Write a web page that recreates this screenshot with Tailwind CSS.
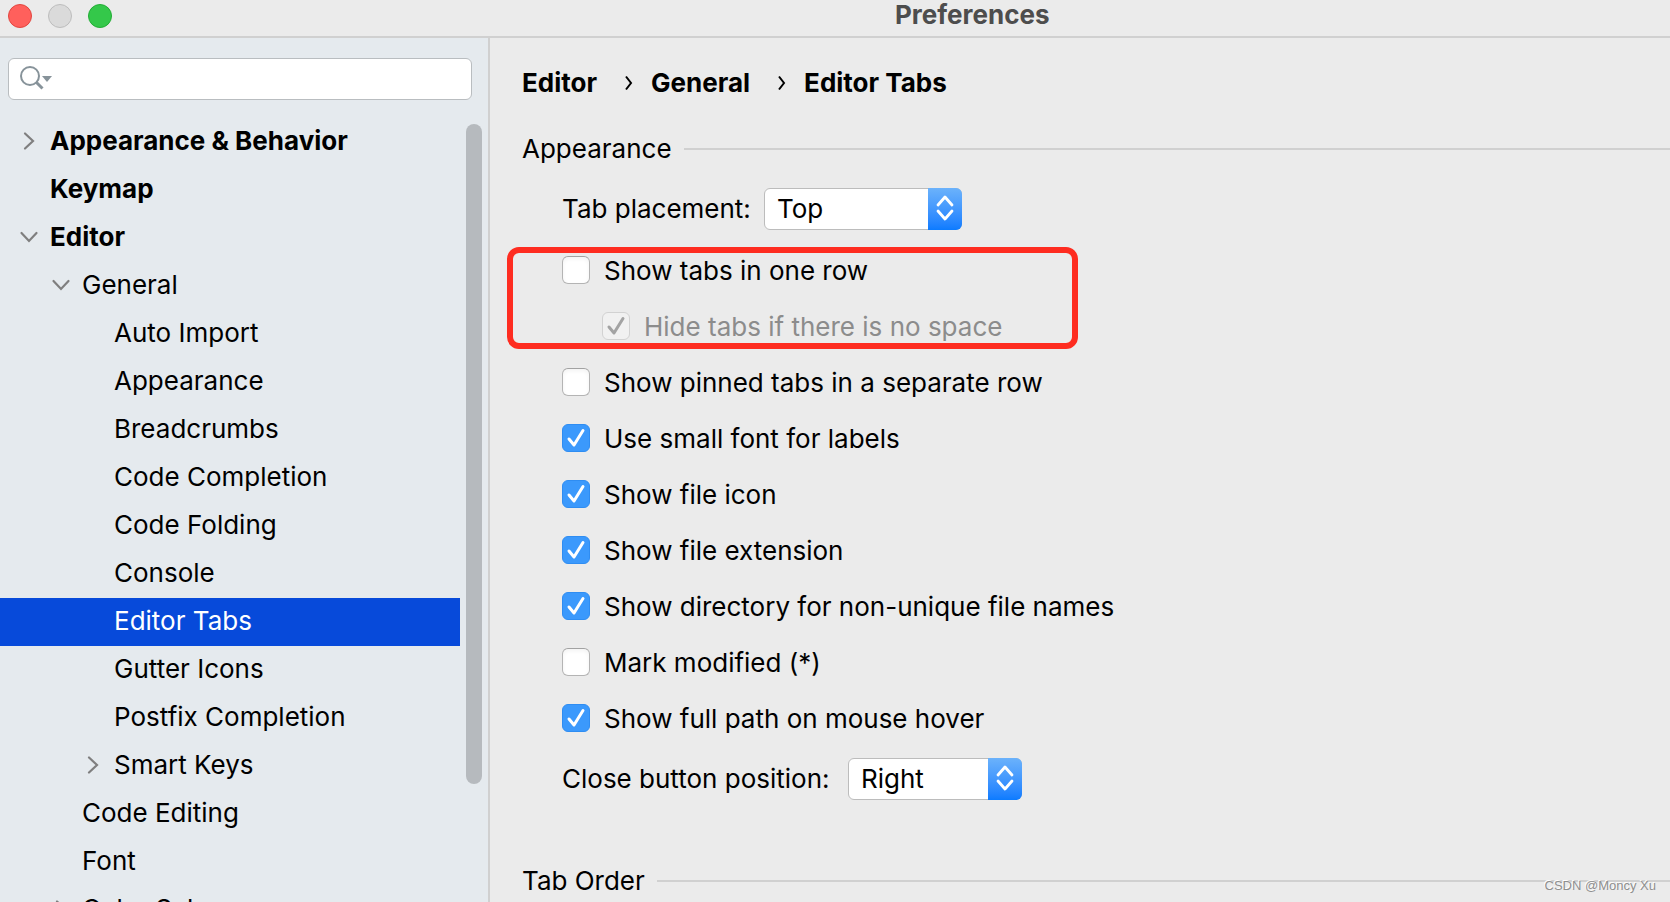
<!DOCTYPE html>
<html lang="en">
<head>
<meta charset="utf-8">
<title>Preferences</title>
<script src="https://cdn.jsdelivr.net/npm/@tailwindcss/browser@4"></script>
</head>
<body class="h-screen overflow-hidden flex flex-col bg-[#ebebeb] text-black text-[26px] leading-9 font-['Inter',sans-serif]">
<svg class="hidden">
  <symbol id="right" viewBox="0 0 20 20"><path d="M6 2.500l8 7.500-8 7.500" fill="none" stroke="#7f7f7f" stroke-width="2.200" stroke-linecap="round"/></symbol>
  <symbol id="down" viewBox="0 0 20 20"><path d="M2.500 6l7.500 8 7.500-8" fill="none" stroke="#7f7f7f" stroke-width="2.200" stroke-linecap="round"/></symbol>
  <symbol id="tick" viewBox="0 0 28 28"><path d="M7 15l5 6 9-14.500" fill="none" stroke="currentColor" stroke-width="3" stroke-linecap="round" stroke-linejoin="round"/></symbol>
  <symbol id="updown" viewBox="0 0 34 42"><path d="M10 17l7-8 7 8M10 23l7 8 7-8" fill="none" stroke="#fff" stroke-width="2.800" stroke-linecap="round" stroke-linejoin="round"/></symbol>
</svg>

<header class="h-[38px] shrink-0 flex items-start border-b-2 border-[#d0d0d0]">
  <div class="flex gap-4 pl-2 pt-1 w-[895px]">
    <button aria-label="Close" class="size-6 rounded-full bg-[#ff605c] border border-[#e2463f]"></button>
    <button aria-label="Minimize" class="size-6 rounded-full bg-[#dadada] border border-[#bdbdbd]"></button>
    <button aria-label="Zoom" class="size-6 rounded-full bg-[#34c84a] border border-[#22ad35]"></button>
  </div>
  <h1 class="font-bold text-[#4d4d4d] leading-[30px]">Preferences</h1>
</header>

<div class="flex flex-1 min-h-0">
  <aside class="w-[490px] shrink-0 bg-[#e5eaee] border-r-2 border-[#d0d0d0] pt-5 flex flex-col">
    <label class="ml-2 mr-4 h-[42px] shrink-0 flex items-center bg-white border border-[#b9bdc0] rounded-md pl-[11px] pb-0.5">
      <svg class="w-8 h-6 shrink-0" viewBox="0 0 32 24"><circle cx="10" cy="10" r="9" fill="none" stroke="#87939a" stroke-width="2"/><path d="M16.500 16.500l6 6" stroke="#87939a" stroke-width="3"/><path d="M22 10h10l-5 6z" fill="#87939a"/></svg>
      <input type="text" aria-label="Search settings" class="flex-1 min-w-0 outline-none px-2">
    </label>
    <div class="flex flex-1 min-h-0 mt-[18px]">
      <nav class="flex-1 overflow-hidden">
        <a href="#" class="flex items-center h-12 pb-0.5 pl-[19px] gap-[11px] font-bold"><svg class="size-5"><use href="#right"/></svg>Appearance &amp; Behavior</a>
        <a href="#" class="flex items-center h-12 pb-0.5 pl-[50px] font-bold">Keymap</a>
        <a href="#" class="flex items-center h-12 pb-0.5 pl-[19px] gap-[11px] font-bold"><svg class="size-5"><use href="#down"/></svg>Editor</a>
        <a href="#" class="flex items-center h-12 pb-0.5 pl-[51px] gap-[11px]"><svg class="size-5"><use href="#down"/></svg>General</a>
        <a href="#" class="flex items-center h-12 pb-0.5 pl-[114px]">Auto Import</a>
        <a href="#" class="flex items-center h-12 pb-0.5 pl-[114px]">Appearance</a>
        <a href="#" class="flex items-center h-12 pb-0.5 pl-[114px]">Breadcrumbs</a>
        <a href="#" class="flex items-center h-12 pb-0.5 pl-[114px]">Code Completion</a>
        <a href="#" class="flex items-center h-12 pb-0.5 pl-[114px]">Code Folding</a>
        <a href="#" class="flex items-center h-12 pb-0.5 pl-[114px]">Console</a>
        <a href="#" aria-current="page" class="flex items-center h-12 pb-0.5 pl-[114px] bg-[#074ada] text-white">Editor Tabs</a>
        <a href="#" class="flex items-center h-12 pb-0.5 pl-[114px]">Gutter Icons</a>
        <a href="#" class="flex items-center h-12 pb-0.5 pl-[114px]">Postfix Completion</a>
        <a href="#" class="flex items-center h-12 pb-0.5 pl-[83px] gap-[11px]"><svg class="size-5"><use href="#right"/></svg>Smart Keys</a>
        <a href="#" class="flex items-center h-12 pb-0.5 pl-[82px]">Code Editing</a>
        <a href="#" class="flex items-center h-12 pb-0.5 pl-[82px]">Font</a>
        <a href="#" class="flex items-center h-12 pb-0.5 pl-[51px] gap-[11px]"><svg class="size-5"><use href="#right"/></svg>Color Scheme</a>
      </nav>
      <div class="w-7 shrink-0 pl-1.5 pt-1.5"><div class="w-4 h-[660px] rounded-full bg-[#b6babe]"></div></div>
    </div>
  </aside>

  <main class="flex-1 min-w-0 overflow-hidden pl-8 pt-[27px]">
    <nav aria-label="Breadcrumb" class="flex items-center h-9 mb-[21px] font-bold">
      <a href="#">Editor</a>
      <svg class="w-2 h-4 ml-7 mr-[18px]" viewBox="0 0 8 16"><path d="M1 1.500L6 8l-5 6.500" fill="none" stroke="#000" stroke-width="2"/></svg>
      <a href="#">General</a>
      <svg class="w-2 h-4 ml-7 mr-[18px]" viewBox="0 0 8 16"><path d="M1 1.500L6 8l-5 6.500" fill="none" stroke="#000" stroke-width="2"/></svg>
      <a href="#">Editor Tabs</a>
    </nav>

    <section>
      <h2 class="flex items-center gap-3 h-[54px]">Appearance<span class="flex-1 h-0.5 bg-[#d0d0d0]"></span></h2>
      <div class="pl-10">
        <div class="flex items-center gap-3 h-[66px]">
          <label for="placement" class="min-w-[190px]">Tab placement:</label>
          <div class="grid h-[42px] w-[198px]">
            <select id="placement" class="col-start-1 row-start-1 appearance-none bg-white border border-[#bcbcbc] rounded-md pl-3"><option>Top</option><option>Bottom</option><option>Left</option><option>Right</option></select>
            <svg class="col-start-1 row-start-1 justify-self-end pointer-events-none w-[34px] h-[42px] rounded-r-md bg-linear-to-b from-[#6bb2fb] to-[#0a7bff]"><use href="#updown"/></svg>
          </div>
        </div>
        <div class="relative">
          <label class="flex items-center gap-3.5 h-14"><input type="checkbox" class="appearance-none size-7 rounded-md bg-white border border-[#b4b4b4] border-t-[#a2a2a2] inset-shadow-sm"><span class="pt-0.5">Show tabs in one row</span></label>
          <label class="flex items-center gap-3.5 h-14 pl-10 text-[#8c8c8c]"><span class="grid"><input type="checkbox" checked disabled class="col-start-1 row-start-1 appearance-none size-7 rounded-md bg-[#f1f1f1] border border-[#d2d2d2]"><svg class="col-start-1 row-start-1 size-7 pointer-events-none text-[#a3a3a3]"><use href="#tick"/></svg></span><span class="pt-0.5">Hide tabs if there is no space</span></label>
          <div class="absolute -left-[55px] top-[5px] w-[571px] h-[102px] rounded-xl border-6 border-[#fe2c20] pointer-events-none"></div>
        </div>
        <label class="flex items-center gap-3.5 h-14"><input type="checkbox" class="appearance-none size-7 rounded-md bg-white border border-[#b4b4b4] border-t-[#a2a2a2] inset-shadow-sm"><span class="pt-0.5">Show pinned tabs in a separate row</span></label>
        <label class="flex items-center gap-3.5 h-14"><span class="grid"><input type="checkbox" checked class="col-start-1 row-start-1 appearance-none size-7 rounded-md bg-[#3b99fc] border border-[#2f8df2]"><svg class="col-start-1 row-start-1 size-7 pointer-events-none text-white"><use href="#tick"/></svg></span><span class="pt-0.5">Use small font for labels</span></label>
        <label class="flex items-center gap-3.5 h-14"><span class="grid"><input type="checkbox" checked class="col-start-1 row-start-1 appearance-none size-7 rounded-md bg-[#3b99fc] border border-[#2f8df2]"><svg class="col-start-1 row-start-1 size-7 pointer-events-none text-white"><use href="#tick"/></svg></span><span class="pt-0.5">Show file icon</span></label>
        <label class="flex items-center gap-3.5 h-14"><span class="grid"><input type="checkbox" checked class="col-start-1 row-start-1 appearance-none size-7 rounded-md bg-[#3b99fc] border border-[#2f8df2]"><svg class="col-start-1 row-start-1 size-7 pointer-events-none text-white"><use href="#tick"/></svg></span><span class="pt-0.5">Show file extension</span></label>
        <label class="flex items-center gap-3.5 h-14"><span class="grid"><input type="checkbox" checked class="col-start-1 row-start-1 appearance-none size-7 rounded-md bg-[#3b99fc] border border-[#2f8df2]"><svg class="col-start-1 row-start-1 size-7 pointer-events-none text-white"><use href="#tick"/></svg></span><span class="pt-0.5">Show directory for non-unique file names</span></label>
        <label class="flex items-center gap-3.5 h-14"><input type="checkbox" class="appearance-none size-7 rounded-md bg-white border border-[#b4b4b4] border-t-[#a2a2a2] inset-shadow-sm"><span class="pt-0.5">Mark modified (*)</span></label>
        <label class="flex items-center gap-3.5 h-14"><span class="grid"><input type="checkbox" checked class="col-start-1 row-start-1 appearance-none size-7 rounded-md bg-[#3b99fc] border border-[#2f8df2]"><svg class="col-start-1 row-start-1 size-7 pointer-events-none text-white"><use href="#tick"/></svg></span><span class="pt-0.5">Show full path on mouse hover</span></label>
        <div class="flex items-center gap-3 h-[66px]">
          <label for="closepos" class="min-w-[274px]">Close button position:</label>
          <div class="grid h-[42px] w-[174px]">
            <select id="closepos" class="col-start-1 row-start-1 appearance-none bg-white border border-[#bcbcbc] rounded-md pl-3"><option>Right</option><option>Left</option><option>None</option></select>
            <svg class="col-start-1 row-start-1 justify-self-end pointer-events-none w-[34px] h-[42px] rounded-r-md bg-linear-to-b from-[#6bb2fb] to-[#0a7bff]"><use href="#updown"/></svg>
          </div>
        </div>
      </div>
    </section>

    <section class="mt-[42px]">
      <h2 class="flex items-center gap-3 h-[54px]">Tab Order<span class="flex-1 h-0.5 bg-[#d0d0d0]"></span></h2>
    </section>
  </main>
</div>
<div class="absolute right-3.5 bottom-2 text-[13px] leading-4 text-[#8f8f8f] text-shadow-[-1px_-1px_0_#ffffff] font-['Liberation_Sans',sans-serif]">CSDN @Moncy Xu</div>
</body>
</html>
